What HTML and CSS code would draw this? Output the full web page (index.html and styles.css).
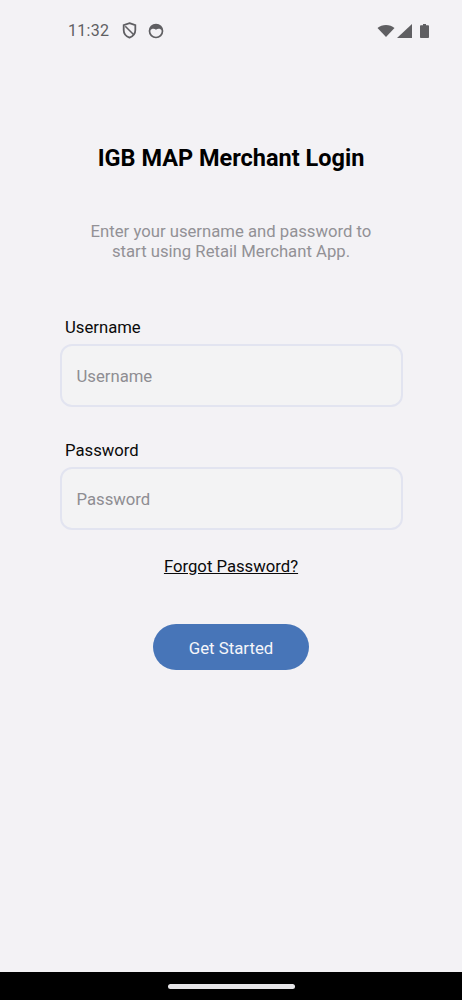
FILE: index.html
```
<!DOCTYPE html>
<html lang="en">
<head>
<meta charset="utf-8">
<title>IGB MAP Merchant Login</title>
<link rel="stylesheet" href="styles.css">
</head>
<body>
<div class="screen">
  <div class="status">
    <span class="time">11:32</span>
    <svg class="ic ic-shield" viewBox="0 0 16 18"><path d="M8 1.2 14.2 3.4V8.4C14.2 12.2 11.6 15.2 8 16.6 4.4 15.2 1.8 12.2 1.8 8.4V3.4Z" fill="none" stroke="#5f5f62" stroke-width="1.9"/><path d="M3.5 4.5 12.5 13.5" stroke="#5f5f62" stroke-width="1.7"/></svg>
    <svg class="ic ic-face" viewBox="0 0 16 16"><circle cx="8" cy="8" r="6.5" fill="none" stroke="#5f5f62" stroke-width="1.7"/><path d="M2 7.6C2 3.8 4.6 1.6 8 1.6S14 3.8 14 7.6C13 6.4 12 5.8 10.6 5.8 9.6 5.8 8.8 6.2 8 6.8 7.2 6.2 6.4 5.8 5.4 5.8 4 5.8 3 6.4 2 7.6Z" fill="#5f5f62"/></svg>
    <span class="spacer"></span>
    <svg class="ic ic-wifi" viewBox="0 0 18 13"><path d="M0.5 3.6C2.8 1.6 5.7 0.5 9 0.5S15.2 1.6 17.5 3.6L9 12.6Z" fill="#5f5f62"/></svg>
    <svg class="ic ic-signal" viewBox="0 0 15 14"><path d="M15 0V14H0Z" fill="#5f5f62"/></svg>
    <svg class="ic ic-battery" viewBox="0 0 9 14"><path d="M3 0H6V1.2H8.2C8.6 1.2 9 1.6 9 2V13.2C9 13.6 8.6 14 8.2 14H0.8C0.4 14 0 13.6 0 13.2V2C0 1.6 0.4 1.2 0.8 1.2H3Z" fill="#5f5f62"/></svg>
  </div>
  <main class="content">
    <h1 class="title">IGB MAP Merchant Login</h1>
    <p class="subtitle">Enter your username and password to<br>start using Retail Merchant App.</p>
    <form class="form">
      <label class="label" for="u">Username</label>
      <input class="input" id="u" type="text" placeholder="Username">
      <label class="label label-second" for="p">Password</label>
      <input class="input" id="p" type="password" placeholder="Password">
    </form>
    <a class="forgot" href="#">Forgot Password?</a>
    <button class="cta" type="button">Get Started</button>
  </main>
  <div class="navbar"><span class="handle"></span></div>
</div>
</body>
</html>
```
FILE: styles.css
```
* { box-sizing: border-box; }
html, body { margin: 0; padding: 0; }
body { width: 462px; height: 1000px; overflow: hidden; background: #f3f2f5; font-family: Roboto, "Liberation Sans", sans-serif; }
.screen { height: 1000px; display: flex; flex-direction: column; }
.status { height: 61px; padding: 0 33px 0 68px; display: flex; align-items: center; flex-shrink: 0; }
.time { font-size: 16px; color: #5f5f62; letter-spacing: 0.3px; margin-right: 13px; }
.ic { display: block; flex-shrink: 0; }
.ic-shield { width: 15px; height: 17px; margin-right: 11px; }
.ic-face { width: 16px; height: 16px; }
.spacer { flex: 1; }
.ic-wifi { width: 18px; height: 14px; margin-right: 2px; }
.ic-signal { width: 15px; height: 14px; margin-right: 8px; }
.ic-battery { width: 9px; height: 14px; }
.content { flex: 1; display: flex; flex-direction: column; align-items: center; }
.title { margin: 82px 0 0; font-size: 23.5px; line-height: 30px; font-weight: 700; color: #000; }
.subtitle { margin: 49px 0 0; font-size: 16.7px; line-height: 20px; text-align: center; color: #929196; }
.form { width: 100%; padding: 0 59px 0 59.5px; margin-top: 56px; display: flex; flex-direction: column; }
.label { font-size: 16.7px; line-height: 20px; color: #0a0a0a; margin-left: 5.5px; margin-bottom: 6px; }
.label-second { margin-top: 34px; }
.input { width: 100%; height: 63px; border: 2px solid #e2e4f0; border-radius: 12px; background: #f3f3f4; padding: 2px 15px 0; font: 16.7px Roboto, "Liberation Sans", sans-serif; outline: none; }
.input::placeholder { color: #8e8d92; opacity: 1; }
.forgot { margin-top: 27px; font-size: 16.7px; line-height: 20px; color: #0a0a0a; text-decoration: underline; }
.cta { margin-top: 47px; width: 156px; height: 46px; border: 0; border-radius: 23px; padding: 1px 0 0; background: #4775b8; color: #f5f6fa; font: 16.8px Roboto, "Liberation Sans", sans-serif; }
.navbar { height: 28px; background: #000; display: flex; align-items: center; justify-content: center; flex-shrink: 0; }
.handle { width: 127px; height: 5px; border-radius: 3px; background: #e6e5e8; }
```
